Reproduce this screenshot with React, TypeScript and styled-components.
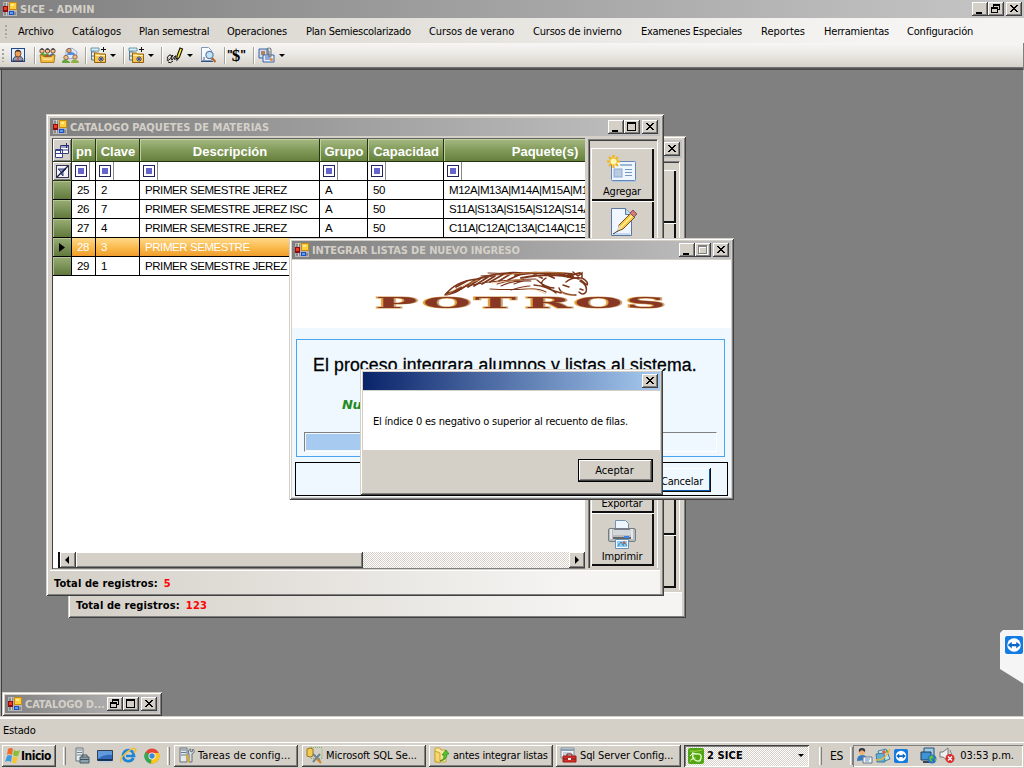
import React from "react";
import styled, { createGlobalStyle, css } from "styled-components";

const FACE = "#d4d0c8";
const raised = css`
  box-shadow: inset -1px -1px 0 #404040, inset 1px 1px 0 #fff, inset -2px -2px 0 #808080;
`;
const checker = css`
  background: conic-gradient(#fff 25%, ${FACE} 0 50%, #fff 0 75%, ${FACE} 0) 0 0 / 2px 2px;
`;

const Global = createGlobalStyle`
  * { box-sizing: border-box; }
  body { margin: 0; background: ${FACE}; overflow: hidden; }
  svg { display: block; flex: none; }
`;

const Screen = styled.div`
  position: relative;
  width: 1024px;
  height: 768px;
  display: flex;
  flex-direction: column;
  overflow: hidden;
  background: ${FACE};
  color: #000;
  font: 11px "DejaVu Sans Condensed", "DejaVu Sans", sans-serif;
  font-stretch: condensed;
  letter-spacing: -0.2px;
  white-space: nowrap;
  cursor: default;
`;

/* ---------- shared window parts ---------- */

const TitleBar = styled.div<{ $active?: boolean; $end?: string }>`
  flex: none;
  height: 18px;
  display: flex;
  align-items: center;
  padding: 0 2px;
  background: ${(p) =>
    p.$active ? "linear-gradient(90deg, #0a246a, #a6caf0)" : `linear-gradient(90deg, #808080, ${p.$end || "#c0c0c0"})`};
`;
const TitleText = styled.span<{ $track?: number }>`
  flex: 1;
  min-width: 0;
  overflow: hidden;
  padding: 1px 0 0 3px;
  color: ${FACE};
  font-weight: bold;
  letter-spacing: ${(p) => p.$track ?? -0.13}px;
  line-height: 17px;
`;
const CaptionButton = styled.span<{ $gap?: boolean }>`
  flex: none;
  width: 16px;
  height: 14px;
  margin-left: ${(p) => (p.$gap ? 2 : 0)}px;
  background: ${FACE};
  ${raised}
`;

type CapKind = "min" | "max" | "restore" | "close" | "maxOff";
const Cap = ({ kind }: { kind: CapKind }) => (
  <CaptionButton $gap={kind === "close"}>
    <svg width="16" height="14" shapeRendering="crispEdges">
      {kind === "min" && <rect x="4" y="10" width="6" height="2" />}
      {kind === "max" && <path d="M3 2h9v9h-9zM4 4v6h7v-6z" fillRule="evenodd" />}
      {kind === "maxOff" && (
        <>
          <path d="M4 3h9v9h-9zM5 5v6h7v-6z" fillRule="evenodd" fill="#fff" />
          <path d="M3 2h9v9h-9zM4 4v6h7v-6z" fillRule="evenodd" fill="#808080" />
        </>
      )}
      {kind === "restore" && (
        <path d="M5 2h7v6h-2v-1h1v-3h-5v1h-1zM3 5h7v6h-7zM4 7v3h5v-3z" fillRule="evenodd" />
      )}
      {kind === "close" && (
        <path d="M4 3h2v1h1v1h2v-1h1v-1h2v1h-1v1h-1v1h-1v1h1v1h1v1h1v1h-2v-1h-1v-1h-2v1h-1v1h-2v-1h1v-1h1v-1h1v-1h-1v-1h-1v-1h-1z" />
      )}
    </svg>
  </CaptionButton>
);

const FormIcon = () => (
  <svg width="15" height="14" viewBox="0 1 15 14" shapeRendering="crispEdges">
    <path d="M1 1h14v14h-14z" fill="#b4b4b4" />
    <path d="M2 2h4v3h-4zM2 11h4v3h-4zM12 11h2v3h-2z" fill="#8a8a8a" />
    <path d="M4 1v4M4 11v3" stroke="#d0d0d0" />
    <rect x="1" y="5" width="5" height="6" fill="#8c0c10" />
    <rect x="2" y="6" width="3" height="3" fill="#f03a24" />
    <rect x="7" y="1" width="8" height="8" fill="#c98c10" />
    <rect x="8" y="2" width="6" height="6" fill="#ffce3a" />
    <rect x="9" y="3" width="3" height="2" fill="#ffec8c" />
    <rect x="7" y="10" width="5" height="4" fill="#2350c0" />
    <rect x="8" y="11" width="3" height="2" fill="#5d9cf8" />
  </svg>
);

const WindowFrame = styled.section<{ $x: number; $y: number; $w: number; $h: number; $pad: string }>`
  position: absolute;
  left: ${(p) => p.$x}px;
  top: ${(p) => p.$y}px;
  width: ${(p) => p.$w}px;
  height: ${(p) => p.$h}px;
  padding: ${(p) => p.$pad};
  display: flex;
  flex-direction: column;
  background: ${FACE};
  box-shadow: inset 1px 1px 0 ${FACE}, inset -1px -1px 0 #404040, inset 2px 2px 0 #fff, inset -2px -2px 0 #808080;
`;

/* ---------- application bars ---------- */

const MenuBar = styled.nav`
  flex: none;
  height: 25px;
  display: flex;
  align-items: center;
  padding-top: 1px;
  background: linear-gradient(90deg, ${FACE}, #f5f4f2 85%);
`;
const Grip = styled.i`
  flex: none;
  width: 2px;
  height: 13px;
  margin: 0 10px 0 5px;
  background: repeating-linear-gradient(#a8a59e 0 2px, transparent 2px 4px);
`;
const MenuItem = styled.span<{ $w: number; $track?: number }>`
  flex: none;
  width: ${(p) => p.$w}px;
  padding-left: 1px;
  letter-spacing: ${(p) => p.$track ?? -0.2}px;
`;
const ToolStrip = styled.div`
  flex: none;
  height: 27px;
  display: flex;
  align-items: center;
  padding-bottom: 3px;
  border-right: 1px solid #808080;
  background: linear-gradient(#f7f6f4, #ebe9e5 40%, #d6d2ca 24px, #808080 24px, #484848 26px, #484848);
`;
const ToolGrip = styled(Grip)`
  margin: 0 6px 0 2px;
`;
const Tool = styled.span<{ $w: number }>`
  flex: none;
  width: ${(p) => p.$w}px;
`;
const ToolSep = styled.i`
  flex: none;
  width: 2px;
  height: 17px;
  margin-right: 3px;
  border-left: 1px solid #a5a299;
  border-right: 1px solid #fff;
`;
const Drop = styled.i`
  flex: none;
  margin: 0 7px 0 3px;
  border: 3px solid transparent;
  border-top-color: #000;
  border-bottom-width: 0;
`;

const UserIcon = () => (
  <svg width="16" height="16" viewBox="0 0 16 16">
    <rect x="1.500" y="1.500" width="13" height="13" fill="#e4effc" stroke="#26458f" />
    <path d="M3 14c0-4 2-4.500 5-4.500s5 .5 5 4.500z" fill="#8aa0b8" stroke="#2c3140" />
    <ellipse cx="8" cy="6.500" rx="3" ry="3.500" fill="#f0a056" stroke="#43301f" strokeWidth=".7" />
    <path d="M5 6c0-4 6-4 6 0l-1-1.500h-4z" fill="#25252b" />
    <path d="M8 10v4" stroke="#d44" strokeWidth="1.500" />
  </svg>
);
const GroupIcon = () => (
  <svg width="17" height="17" viewBox="0 0 17 17">
    {[3, 8.5, 14].map((x) => (
      <g key={x}>
        <circle cx={x} cy="4" r="2.200" fill="#f5c08c" stroke="#4a3020" strokeWidth=".8" />
        <path d={`M${x - 2} 3q2-4 4 0z`} fill="#4b4c5c" />
      </g>
    ))}
    <path d="M1 9q0-3 3-3l2 1q2-1 3 0l2 1q4-3 5 1v2h-15z" fill="#58a63d" />
    <path d="M10 9l2-2q3-2 4 3z" fill="#3568bb" />
    <path d="M6 10q2-5 5 0z" fill="#d93a2c" />
    <path d="M1 8h3l1 2h7l1-2h3l-1 7.500h-13z" fill="#f2bb3c" stroke="#a0680e" strokeWidth=".8" />
    <path d="M3 11h11M4 12.500h9" stroke="#fce49a" />
  </svg>
);
const PeopleIcon = () => (
  <svg width="17" height="17" viewBox="0 0 17 17">
    <path d="M4 3l6-2 5 4-1 6-10 1z" fill="#dfeafc" stroke="#90a6cc" strokeWidth=".9" />
    <path d="M5 8q0-3 4-3t4 3z" fill="#5b8fdb" />
    <circle cx="7" cy="3.500" r="2.200" fill="#eea86c" stroke="#5b4738" strokeWidth=".7" />
    <circle cx="4" cy="10.500" r="2.200" fill="#f3bd86" stroke="#5b4738" strokeWidth=".7" />
    <circle cx="13" cy="10" r="2.200" fill="#f3bd86" stroke="#5b4738" strokeWidth=".7" />
    <path d="M0 16q0-4 4-3t4 3z" fill="#61a639" />
    <path d="M9 16q0-4 4-3.500t4 3.500z" fill="#91af45" />
  </svg>
);
const FolderPlusIcon = () => (
  <svg width="17" height="17" viewBox="0 0 17 17">
    <path d="M1.500 1v12h4M1.500 5h4M1.500 9h4" stroke="#547b91" fill="none" />
    <path d="M1 1h8v3h-8z" fill="#d9eff7" stroke="#4c849b" strokeWidth=".8" />
    <path d="M4.500 6h4l1 1h6v8.500h-11z" fill="#f4c84e" stroke="#94600f" />
    <path d="M5.500 8.500h9.500" stroke="#fff0ab" />
    <path d="M11 9v6M8 12h6M9 10l4 4M13 10l-4 4" stroke="#3b4a99" />
    <path d="M13.500 0v5M11 2.500h5" stroke="#111" shapeRendering="crispEdges" />
  </svg>
);
const PenIcon = () => (
  <svg width="18" height="17" viewBox="0 0 18 17">
    <path d="M11 9l3-8 2.500 1-3 8-2.500 3z" fill="#ffec1c" stroke="#111" strokeWidth="1.100" />
    <path d="M1 11q2-4 4-3t-2 5q-3 2-1-2M5 10l2-2q-3 5-1 5l3-4q2-1 0 2t2 0M7 14q-3 3-5 1" fill="none" stroke="#111" />
  </svg>
);
const PreviewIcon = () => (
  <svg width="17" height="16" viewBox="0 0 17 16">
    <path d="M1.500.5h7l3 3v10h-10z" fill="#f8fbff" stroke="#809ab7" />
    <path d="M1 14.500h12" stroke="#2c518c" />
    <path d="M3 10l2 3m0-3l-2 3" stroke="#6f8195" strokeWidth=".8" />
    <circle cx="9.500" cy="8" r="3.600" fill="#bfe3fa" stroke="#637ca0" strokeWidth="1.200" />
    <path d="M12 11l3.500 4" stroke="#b46822" strokeWidth="2" />
  </svg>
);
const Dollar = styled.span`
  flex: none;
  width: 26px;
  margin: 0 0 0 -2px;
  display: flex;
  font: bold 12px/18px "Liberation Sans", Arial, sans-serif;
  letter-spacing: -1px;
`;
const DollarSign = styled.b`
  font: bold 17px/19px "Liberation Serif", serif;
  letter-spacing: 0;
`;
const ClipIcon = () => (
  <svg width="18" height="17" viewBox="0 0 18 17">
    <path d="M1 2h9v9h-9z" fill="#cedcf4" stroke="#3b63a4" />
    <rect x="3" y="4" width="4" height="4" fill="#b58158" />
    <path d="M5 8h11v7h-11z" fill="#e5edfa" stroke="#3b63a4" />
    <path d="M7 12h7M7 10h5" stroke="#3a68b8" />
    <path d="M9 8v-5q0-2 2-2t2 2v6q0 1-1 1t-1-1v-5" fill="none" stroke="#72767e" strokeWidth="1.100" />
    <circle cx="13.500" cy="12.500" r="1.500" fill="#e88935" />
  </svg>
);

/* ---------- workspace ---------- */

const Workspace = styled.main`
  flex: none;
  position: relative;
  height: 646px;
  background: #808080;
  border-left: 1px solid #a0a0a0;
  border-right: 1px solid ${FACE};
  box-shadow: inset 1px 0 0 #404040;
`;
const CatalogBody = styled.div`
  height: 434px;
  display: flex;
  margin: 1px 2px 0;
`;
const GridPane = styled.div`
  flex: none;
  width: 533px;
  height: 431px;
  margin-top: 1px;
  display: flex;
  flex-direction: column;
  overflow: hidden;
  background: #fff;
  border-left: 1px solid #404040;
  border-top: 1px solid #606060;
`;
const GridRow = styled.div<{ $h: number; $sel?: boolean }>`
  flex: none;
  display: grid;
  grid-template-columns: 19px 24px 44px 180px 48px 76px 142px;
  height: ${(p) => p.$h}px;
  font: 11.5px "Liberation Sans", Arial, sans-serif;
  letter-spacing: -0.43px;
  color: ${(p) => (p.$sel ? "#fff" : "#000")};
  background: ${(p) => (p.$sel ? "linear-gradient(#ffd98a, #f9b748 55%, #ee9a28)" : "#fff")};
`;
const Cell = styled.span`
  overflow: hidden;
  padding: 2px 0 0 5px;
  line-height: 15px;
  border-right: 1px solid #000;
  border-bottom: 1px solid #000;
`;
const HeadCell = styled.span<{ $left?: number }>`
  overflow: hidden;
  display: flex;
  align-items: center;
  justify-content: center;
  padding: 2px 0 0 ${(p) => p.$left || 1}px;
  background: linear-gradient(#a5b982, #829b5a 50%, #65803d);
  border-right: 1px solid #263313;
  border-bottom: 1px solid #263313;
  box-shadow: inset 1px 1px 0 #bfd09f;
  color: #fff;
  font: bold 13px "Liberation Sans", Arial, sans-serif;
  letter-spacing: 0;
`;
const RowHead = styled.span`
  display: flex;
  align-items: center;
  justify-content: center;
  background: linear-gradient(#98ad74, #61793d);
  border-right: 1px solid #000;
  border-bottom: 1px solid #000;
  box-shadow: inset 1px 1px 0 #b2c592;
`;
const CornerCell = styled.span`
  display: flex;
  align-items: center;
  justify-content: center;
  background: ${FACE};
  border-right: 1px solid #263313;
  border-bottom: 1px solid #263313;
  box-shadow: inset 1px 1px 0 #fff, inset -1px -1px 0 #808080;
`;
const FilterCell = styled.span`
  padding: 3px 0 0 3px;
  border-right: 1px solid #000;
  border-bottom: 1px solid #000;
  background: linear-gradient(90deg, transparent 17px, #888 17px 18px, transparent 18px);
`;
const FilterBox = styled.i`
  display: block;
  width: 12px;
  height: 12px;
  border: 1px solid #242460;
  background: #6464cc;
  box-shadow: inset 0 0 0 2px #fff;
`;
const HScroll = styled.div`
  flex: none;
  height: 17px;
  margin-top: auto;
  display: flex;
  padding: 0 0 0 5px;
  border-bottom: 1px solid #808080;
`;
const ScrollTrack = styled.div`
  flex: 1;
  display: flex;
  border-left: 2px solid #111;
  ${checker}
`;
const ScrollArrow = styled.span`
  flex: none;
  width: 16px;
  height: 16px;
  background: ${FACE};
  ${raised}
`;
const ScrollThumb = styled.span`
  flex: none;
  width: 287px;
  height: 16px;
  margin-right: auto;
  background: ${FACE};
  ${raised}
`;
const SidePanel = styled.aside`
  flex: none;
  width: 70px;
  height: 429px;
  margin: 2px 0 0 3px;
  padding: 8px 3px 2px 2px;
  display: flex;
  flex-direction: column;
  border-left: 1px solid #808080;
  border-top: 1px solid #808080;
  border-right: 1px solid #fff;
  box-shadow: inset 1px 1px 0 #404040;
`;
const SideButton = styled.div`
  flex: 1;
  min-height: 0;
  display: flex;
  flex-direction: column;
  align-items: center;
  justify-content: flex-end;
  padding: 0 1px 3px 0;
  line-height: 13px;
  background: ${FACE};
  box-shadow: inset 1px 1px 0 #fff, inset -2px -2px 0 #111;
  &:first-child,
  &:last-child {
    flex: 0 0 53px;
  }
`;
const SideLabel = styled.span`
  height: 13px;
`;
const Totals = styled.div`
  flex: none;
  height: 24px;
  margin-top: 1px;
  display: flex;
  align-items: center;
  padding: 1px 0 0 4px;
  border-top: 1px solid #fff;
  background: linear-gradient(90deg, ${FACE}, #f5f4f2 85%);
  font-weight: bold;
  letter-spacing: 0.1px;
`;
const Count = styled.b`
  margin-left: 6px;
  color: #f00;
  letter-spacing: 0.3px;
`;

const CornerIcon = () => (
  <svg width="16" height="17" viewBox="0 0 16 17">
    <path d="M1.500 7.500h7v8h-7zM6.500 3.500h8v8h-8z" fill="#fff" stroke="#394084" />
    <path d="M2 8.500h4M2 11.500h7M7 5h7M7 8h8" stroke="#394084" />
    <path d="M8 3.500h7M12.500 1v5" stroke="#242b70" />
  </svg>
);
const ClearFilterIcon = () => (
  <svg width="13" height="13" viewBox="0 0 13 13">
    <rect x=".5" y=".5" width="12" height="12" fill="#f3f3f8" stroke="#343458" />
    <path d="M2 4h8L7 7v4L5 9V7z" fill="#8c9abe" stroke="#383e78" />
    <path d="M1 12L12 1" stroke="#141c3d" strokeWidth="1.200" />
  </svg>
);
const AddIcon = () => (
  <svg width="30" height="30" viewBox="0 0 30 30">
    <rect x="5" y="6" width="24" height="21" rx="1.500" fill="#a9c4e2" />
    <rect x="4.500" y="6.500" width="24" height="19" rx="1" fill="#eef6ff" stroke="#6687b5" />
    <path d="M13 10h12" stroke="#9db6d2" strokeWidth="2" />
    <rect x="7" y="14" width="8" height="8" fill="#b8cbe2" stroke="#8ba9cc" />
    <path d="M18 14.500h7M18 17.500h7M18 20.500h7" stroke="#7897bc" />
    <path d="M6.500 0v13M0 6.500h13M2 2l9 9M11 2l-9 9" stroke="#f3b514" strokeWidth="2.200" />
    <circle cx="6.500" cy="6.500" r="3" fill="#fff8b4" />
  </svg>
);
const EditIcon = () => (
  <svg width="30" height="30" viewBox="0 0 30 30">
    <path d="M4.500 1.500h14l6 6v21h-20z" fill="#eff6ff" stroke="#5d789f" />
    <path d="M18.500 1.500v6h6" fill="#c6daf0" stroke="#5d789f" />
    <path d="M6 27h17" stroke="#c5d8ed" strokeWidth="2" />
    <path d="M12 18L24 6l4 4-12 12-5 2z" fill="#f7c744" stroke="#725427" />
    <path d="M14 20L26 8" stroke="#fff1a2" strokeWidth="1.500" />
    <path d="M23 6l3-3 4 4-3 3z" fill="#d47979" stroke="#7b5660" />
    <path d="M12 18l3 3-5 3z" fill="#efddbd" />
    <path d="M11 24q-2 1-5 3" stroke="#333" fill="none" />
  </svg>
);
const PrinterIcon = () => (
  <svg width="30" height="30" viewBox="0 0 30 30">
    <path d="M8.500.5h10l3 3v9h-13z" fill="#edf6ff" stroke="#7790af" />
    <rect x="1.500" y="8.500" width="27" height="13" rx="1.500" fill="#b8bbc0" stroke="#777c82" />
    <path d="M4 9v10M25 9v10" stroke="#e7e8ea" strokeWidth="2" />
    <path d="M6 9h18v6h-18z" fill="#d4d6d9" />
    <path d="M7 9h16" stroke="#777e88" strokeWidth="2" />
    <path d="M6 18h18" stroke="#666" strokeWidth="2" />
    <path d="M17 17h5" stroke="#3c80e9" strokeWidth="2" />
    <path d="M8.500 19.500h13v9h-13z" fill="#f6fbff" stroke="#688fb5" />
    <path d="M10 21h10v6h-10z" fill="#8fcaf0" />
    <path d="M11 26l3-4 3 4M15 25l3-2 2 3" stroke="#3786b8" fill="none" />
    <path d="M16 23l2-1" stroke="#e64f2a" strokeWidth="2" />
  </svg>
);

const headers: { label: string; left?: number }[] = [
  { label: "pn" },
  { label: "Clave" },
  { label: "Descripción" },
  { label: "Grupo" },
  { label: "Capacidad" },
  { label: "Paquete(s)", left: 61 },
];
const rows = [
  ["25", "2", "PRIMER SEMESTRE JEREZ", "A", "50", "M12A|M13A|M14A|M15A|M16A"],
  ["26", "7", "PRIMER SEMESTRE JEREZ ISC", "A", "50", "S11A|S13A|S15A|S12A|S14A|"],
  ["27", "4", "PRIMER SEMESTRE JEREZ", "A", "50", "C11A|C12A|C13A|C14A|C15A"],
  ["28", "3", "PRIMER SEMESTRE", "", "", ""],
  ["29", "1", "PRIMER SEMESTRE JEREZ", "", "", ""],
];

const sideButtons = ["Agregar", "", "", "", "", "", "Exportar", "Imprimir"];

const CatalogWindow = ({ x, y, total, full }: { x: number; y: number; total: string; full?: boolean }) => (
  <WindowFrame $x={x} $y={y} $w={618} $h={482} $pad="4px">
    <TitleBar>
      {full && <FormIcon />}
      <TitleText $track={0.05}>{full && "CATALOGO PAQUETES DE MATERIAS"}</TitleText>
      <Cap kind="min" />
      <Cap kind="max" />
      <Cap kind="close" />
    </TitleBar>
    <CatalogBody>
      <GridPane>
        {full && (
          <>
            <GridRow $h={23}>
              <CornerCell>
                <CornerIcon />
              </CornerCell>
              {headers.map((h) => (
                <HeadCell key={h.label} $left={h.left}>
                  {h.label}
                </HeadCell>
              ))}
            </GridRow>
            <GridRow $h={19}>
              <CornerCell>
                <ClearFilterIcon />
              </CornerCell>
              {headers.map((h) => (
                <FilterCell key={h.label}>
                  <FilterBox />
                </FilterCell>
              ))}
            </GridRow>
            {rows.map((r) => (
              <GridRow key={r[0]} $h={19} $sel={r[0] === "28"}>
                <RowHead>
                  {r[0] === "28" && (
                    <svg width="6" height="9">
                      <path d="M0 0l6 4.500-6 4.500z" />
                    </svg>
                  )}
                </RowHead>
                {r.map((c, i) => (
                  <Cell key={i}>{c}</Cell>
                ))}
              </GridRow>
            ))}
            <HScroll>
              <ScrollTrack>
                <ScrollArrow>
                  <svg width="16" height="16">
                    <path d="M9 4v8L5 8z" />
                  </svg>
                </ScrollArrow>
                <ScrollThumb />
                <ScrollArrow>
                  <svg width="16" height="16">
                    <path d="M6 4v8l4-4z" />
                  </svg>
                </ScrollArrow>
              </ScrollTrack>
            </HScroll>
          </>
        )}
      </GridPane>
      <SidePanel>
        {sideButtons.map((label, i) => (
          <SideButton key={i}>
            {full && i === 0 && <AddIcon />}
            {full && i === 1 && <EditIcon />}
            {full && i === 7 && <PrinterIcon />}
            <SideLabel>{full && label}</SideLabel>
          </SideButton>
        ))}
      </SidePanel>
    </CatalogBody>
    <Totals>
      Total de registros:<Count>{total}</Count>
    </Totals>
  </WindowFrame>
);

/* ---------- integration dialog ---------- */

const Banner = styled.div`
  flex: none;
  height: 68px;
  margin-top: 1px;
  padding: 11px 0 0 82px;
  background: #fff;
`;
const DialogBody = styled.div`
  flex: 1;
  min-height: 0;
  display: flex;
  flex-direction: column;
  padding: 11px 3px 2px;
  background: #eff7ff;
`;
const ProcessBox = styled.div`
  flex: none;
  height: 118px;
  margin: 0 3px 0 1px;
  padding: 14px 7px 0;
  border: 1px solid #4aa3ee;
`;
const Heading = styled.div`
  padding-left: 9px;
  font: 17.6px/22px "Liberation Sans", Arial, sans-serif;
  letter-spacing: 0.15px;
  -webkit-text-stroke: 0.3px #000;
`;
const Progressing = styled.div`
  margin-top: 20px;
  padding-left: 38px;
  font: italic bold 13px/18px "DejaVu Sans", sans-serif;
  letter-spacing: -0.5px;
  color: #228b22;
`;
const ProgressBar = styled.div`
  height: 20px;
  margin: 18px 0 0;
  padding: 1px;
  border: 1px solid #808080;
  border-right-color: #fff;
  border-bottom-color: #fff;
`;
const ProgressFill = styled.div`
  width: 80px;
  height: 100%;
  background: #a6caf0;
`;
const DialogFooter = styled.div`
  flex: none;
  height: 34px;
  margin-top: 5px;
  padding: 5px 16px 3px;
  display: flex;
  justify-content: flex-end;
  border: 1px solid #000;
`;
const CancelButton = styled.span`
  width: 75px;
  height: 24px;
  padding-right: 8px;
  line-height: 27px;
  text-align: right;
  box-shadow: inset -1px -1px 0 #111, inset 1px 1px 0 #fff, inset -2px -2px 0 #0a58a8;
`;

const Logo = () => (
  <svg width="296" height="42" viewBox="0 0 296 42">
    <g fill="none" stroke="#7c3519" strokeLinecap="round">
      <path d="M71 24Q82 10 103 8Q125 0 150 2Q180 0 205 8" strokeWidth="1.500" />
      <path d="M73 23Q82 21 87 17" strokeWidth="3" />
      <path d="M82 16l11-6M87 18l14-9M94 16l12-8M100 15l14-9M108 13l13-8M116 11l14-8M125 10l13-8M134 9l13-6" strokeWidth="1.700" />
      <path d="M82 18Q112 9 146 9M99 9l20-4M107 5l29-2M114 2l35 1M123 13q15-5 39-5" strokeWidth="1" />
      <path d="M141 4q26-4 57-1M147 7q30-6 53 0M160 3l8 4M171 3l9 4M184 2l10 4M193 5l13-3M197 3l3 4" strokeWidth="1.900" />
      <path d="M199 1l5 4 4-3v5q7 4 5 7l-6-5M207 7q-9-1-15 4M206 10q8 4 6 11-3 4-7 0M209 19l-3-1" strokeWidth="1.500" />
      <path d="M189 14l6 2M202 24q-15 0-17-7M163 9q9 8 17 8M160 14q13 1 22 8M172 7q-8 5-1 9 8 4 16 6" strokeWidth="1.400" />
      <path d="M116 18q20 1 36 0 12-1 20 3M127 15q12-6 27-5M140 13q10-4 17-3M137 19q13-4 19-4" strokeWidth="1.100" />
    </g>
    <g stroke="#e2aa61" strokeWidth=".6" fill="none">
      <path d="M73 24Q88 13 105 9M130 4Q162 0 190 2M118 12l31-4M151 17q11 0 21 6M187 20q4 5 13 4" />
    </g>
    <text
      transform="scale(4.400 1)"
      x="0.350 11.100 22.900 34.300 45.500 57.200"
      y="37"
      fontFamily="DejaVu Serif"
      fontWeight="bold"
      fontSize="14"
      letterSpacing="0"
      fill="#873723"
      stroke="#d7a256"
      strokeWidth="1"
      paintOrder="stroke"
    >
      POTROS
    </text>
  </svg>
);

const MessageText = styled.div`
  flex: none;
  height: 59px;
  margin-top: 1px;
  padding-left: 10px;
  line-height: 62px;
  background: #fff;
`;
const MessageActions = styled.div`
  flex: 1;
  display: flex;
  justify-content: flex-end;
  align-items: flex-start;
  padding: 9px 7px 0;
`;
const DefaultButton = styled.span`
  width: 75px;
  height: 23px;
  padding-right: 2px;
  border: 1px solid #000;
  text-align: center;
  letter-spacing: 0;
  line-height: 22px;
  background: ${FACE};
  ${raised}
`;

/* ---------- bottom bars ---------- */

const StatusBar = styled.footer`
  flex: none;
  height: 25px;
  margin-top: 1px;
  padding-left: 3px;
  border-top: 2px solid #fff;
  line-height: 23px;
`;
const TaskBar = styled.footer`
  flex: 1;
  display: flex;
  align-items: center;
  border-top: 1px solid #fff;
  padding: 0 1px 0 2px;
`;
const TaskButton = styled.span<{ $w: number; $gap?: number; $pressed?: boolean; $bold?: boolean; $track?: number }>`
  flex: none;
  width: ${(p) => p.$w}px;
  height: 22px;
  margin-right: ${(p) => p.$gap ?? 3}px;
  padding: 0 5px 0 4px;
  display: flex;
  align-items: center;
  gap: 3px;
  font-weight: ${(p) => (p.$bold ? "bold" : "normal")};
  letter-spacing: ${(p) => p.$track ?? -0.1}px;
  ${(p) =>
    p.$pressed
      ? css`
          ${checker}
          box-shadow: inset 1px 1px 0 #404040, inset -1px -1px 0 #fff, inset 2px 2px 0 #808080;
        `
      : raised}
`;
const StartButton = styled(TaskButton)`
  padding: 0 0 0 2px;
  gap: 0;
  font-size: 12px;
`;
const Push = styled.i`
  margin-left: auto;
  border: 3px solid transparent;
  border-top-color: #000;
  border-bottom-width: 0;
`;
const TaskSep = styled.i<{ $m: string }>`
  flex: none;
  width: 3px;
  height: 18px;
  margin: ${(p) => p.$m};
  border-left: 1px solid #fff;
  border-right: 1px solid #808080;
`;
const Quick = styled.span`
  display: flex;
  align-items: center;
  gap: 7px;
  width: 93px;
`;
const Lang = styled.span`
  flex: none;
  width: 20px;
  font-size: 12px;
`;
const Tray = styled.div`
  flex: none;
  width: 170px;
  height: 22px;
  display: flex;
  align-items: center;
  gap: 2px;
  padding: 0 9px 0 3px;
  box-shadow: inset 1px 1px 0 #808080, inset -1px -1px 0 #fff;
`;
const TrayGap = styled.i`
  width: 8px;
`;
const Clock = styled.span`
  margin-left: auto;
  letter-spacing: 0;
`;

const WinFlag = () => (
  <svg width="17" height="17" viewBox="0 0 17 17">
    <path d="M4 2q3-2 5 0l-1 6q-3-2-5 0z" fill="#ed6c2c" />
    <path d="M10 3q3 2 6 0l-2 6q-3 1-5-1z" fill="#88bf36" />
    <path d="M3 9q3-2 5 0l-1 6q-3-2-6 0z" fill="#419bdf" />
    <path d="M9 9q2 2 5 1l-2 6q-3 1-4-1z" fill="#f6c52f" />
  </svg>
);
const ServerIcon = () => (
  <svg width="16" height="17" viewBox="0 0 16 17">
    <path d="M2 1h7v13h-7z" fill="#e9edf0" stroke="#66727d" />
    <path d="M3 3h5M3 5.500h5M3 8h5" stroke="#728392" />
    <path d="M6 10h9v6h-9z" fill="#8ca0ad" stroke="#495b67" />
    <path d="M8 10v-2h5v2M6 12.500h9" fill="none" stroke="#41515d" />
  </svg>
);
const DesktopIcon = () => (
  <svg width="16" height="16" viewBox="0 0 16 16">
    <path d="M.5 2.500h15v10h-15z" fill="#3269bc" stroke="#344250" />
    <path d="M1 3h14v4Q7 6 1 11z" fill="#6199dd" />
    <path d="M1 13h14l-2 2h-10z" fill="#c1cbd3" />
    <path d="M1 12h14" stroke="#18345a" strokeWidth="2" />
  </svg>
);
const IeIcon = () => (
  <svg width="17" height="17" viewBox="0 0 17 17">
    <path d="M13.500 11Q11 15 7 14T3 8Q4 3 8.500 3T14 9H6" fill="none" stroke="#1c85d7" strokeWidth="2.700" />
    <path d="M1 15Q-1 12 6 6T15 2q2 1-1 4" fill="none" stroke="#eebd31" strokeWidth="1.500" />
  </svg>
);
const ChromeIcon = () => (
  <svg width="16" height="16" viewBox="0 0 16 16">
    <circle cx="8" cy="8" r="7.500" fill="#e84435" />
    <path d="M8 8L1.500 4A7.500 7.500 0 0 0 7 15.500z" fill="#34a853" />
    <path d="M8 8h7.500A7.500 7.500 0 0 1 7 15.500z" fill="#fbc91c" />
    <path d="M8 5h7q1 2 .5 4H8z" fill="#fbc91c" />
    <circle cx="8" cy="8" r="3.500" fill="#fff" />
    <circle cx="8" cy="8" r="2.700" fill="#4285d4" />
  </svg>
);
const ToolsIcon = () => (
  <svg width="17" height="17" viewBox="0 0 17 17">
    <path d="M2 1h7v14h-7z" fill="#e4e9ec" stroke="#65717a" />
    <path d="M3 3h5M3 5.500h5M3 8h5" stroke="#657888" />
    <path d="M13 2q-4 1-2 5v8h3V7q4-2 1-5l-1 3-2-1z" fill="#d4dee5" stroke="#64717c" />
    <path d="M9 8l2 7" stroke="#e9a71d" strokeWidth="2" />
  </svg>
);
const SqlIcon = () => (
  <svg width="17" height="17" viewBox="0 0 17 17">
    <rect x="5" y=".5" width="11" height="11" fill="none" stroke="#79b956" strokeDasharray="1 1" />
    <path d="M1 2q3-2 6 0v7q-3 2-6 0z" fill="#efcd51" stroke="#9e741c" />
    <path d="M7 7l7 7M14 7l-7 8" stroke="#718391" strokeWidth="2" />
    <path d="M11 12l4 4" stroke="#d98520" strokeWidth="2" />
  </svg>
);
const FolderIcon = () => (
  <svg width="17" height="17" viewBox="0 0 17 17">
    <path d="M2 1h5l1 2h5v12H2z" fill="#fae697" stroke="#c7a63a" />
    <path d="M2 4l5 2v10l-5-2z" fill="#f8d66b" stroke="#c7a63a" />
    <path d="M7 14q5-2 4-6H9l4-5 3 4h-2q0 6-7 7z" fill="#52c42c" stroke="#2c841a" strokeWidth=".7" />
  </svg>
);
const ConfigIcon = () => (
  <svg width="17" height="17" viewBox="0 0 17 17">
    <path d="M1 1h13v10H1z" fill="#f1f4f7" stroke="#7f8b96" />
    <path d="M1 3h13" stroke="#8ca0b5" strokeWidth="2" />
    <path d="M3 6h8M3 8h8" stroke="#9da8b3" />
    <path d="M3 9h13v6H3z" fill="#d72f28" stroke="#951e19" />
    <path d="M7 9V7h5v2M3 12h13" fill="none" stroke="#74211f" />
    <rect x="8" y="11" width="3" height="2" fill="#eee" />
  </svg>
);
const SiceIcon = () => (
  <svg width="16" height="16" viewBox="0 0 16 16">
    <rect width="16" height="16" rx="2" fill="#52a615" />
    <path d="M2 3q6 1 12-1M2 14q1-5 6-4" stroke="#a1d445" fill="none" />
    <path d="M4 5l4 1q6-1 5 4t-6 2q-3-2-2-6" fill="none" stroke="#e7ffc7" strokeWidth="1.400" />
    <path d="M2 8l3-3M3 12l3-2" stroke="#fff" />
  </svg>
);
const TrayUser = () => (
  <svg width="17" height="16" viewBox="0 0 17 16">
    <circle cx="6" cy="4" r="3" fill="#f1b06e" />
    <path d="M3 4q-1-4 3-4t3 4l-3-2z" fill="#343743" />
    <path d="M1 13q0-6 5-6t5 5z" fill="#347bc5" />
    <path d="M7 9h9v6H7z" fill="#f4f7fb" stroke="#67788a" />
    <path d="M9 11h5M9 13h4" stroke="#6d8dba" />
  </svg>
);
const TrayGlobe = () => (
  <svg width="17" height="16" viewBox="0 0 17 16">
    <path d="M3 3l8-2 4 10-8 3z" fill="#bfe2ef" stroke="#3983a9" />
    <path d="M1 6l8-1 1 9H2z" fill="#69aecf" stroke="#3c7e9c" />
    <path d="M7 3l3-1 1 3-3 1z" fill="#e65d3a" />
    <path d="M11 3l2-1 1 3-2 1z" fill="#63ad44" />
    <path d="M1 12Q10 13 15 1" fill="none" stroke="#efb43a" strokeWidth="1.500" />
  </svg>
);
const ViewerIcon = ({ size = 16 }: { size?: number }) => (
  <svg width={size} height={size} viewBox="0 0 16 16">
    <rect width="16" height="16" rx="2" fill="#147be2" />
    <circle cx="8" cy="8" r="6" fill="#fff" />
    <path d="M2.500 8L6 5v2h4V5l3.500 3-3.500 3V9H6v2z" fill="#0b67cc" />
  </svg>
);
const NetIcon = () => (
  <svg width="17" height="17" viewBox="0 0 17 17">
    <path d="M4 1h10v8H4z" fill="#9ecbe8" stroke="#294f75" />
    <path d="M1 5h10v8H1z" fill="#3f94d5" stroke="#243d59" />
    <path d="M3 15h7" stroke="#33475b" strokeWidth="2" />
    <circle cx="12" cy="12" r="4.500" fill="#2b70c4" />
    <path d="M9 10l3-2 2 3-3 1 2 3-3-1zM14 13l2-2v3z" fill="#5bc142" />
  </svg>
);
const MuteIcon = () => (
  <svg width="17" height="17" viewBox="0 0 17 17">
    <path d="M1 5h3l5-4v13l-5-4H1z" fill="#eff0f1" stroke="#777" />
    <path d="M11 3q3 4 0 8" fill="none" stroke="#888" />
    <circle cx="11" cy="11.500" r="4.500" fill="#db2c2b" />
    <path d="M9 9.500l4 4m0-4l-4 4" stroke="#fff" strokeWidth="1.400" />
  </svg>
);

const EdgeTab = styled.div`
  position: absolute;
  right: 0;
  top: 630px;
  width: 24px;
  height: 54px;
  padding: 6px 0 0 5px;
  background: #f5f5f6;
  clip-path: polygon(0 3px, 3px 0, 100% 0, 100% 100%, 0 39px);
`;

const menu: [string, number, number?][] = [
  ["Archivo", 54],
  ["Catálogos", 67, 0],
  ["Plan semestral", 88, -0.2],
  ["Operaciones", 79],
  ["Plan Semiescolarizado", 123, -0.3],
  ["Cursos de verano", 104, -0.1],
  ["Cursos de invierno", 108],
  ["Examenes Especiales", 120, -0.3],
  ["Reportes", 63, 0],
  ["Herramientas", 83],
  ["Configuración", 80],
];

export default function App() {
  return (
    <Screen>
      <Global />
      <TitleBar $end="#c6c6c6">
        <FormIcon />
        <TitleText $track={0.1}>SICE - ADMIN</TitleText>
        <Cap kind="min" />
        <Cap kind="restore" />
        <Cap kind="close" />
      </TitleBar>
      <MenuBar>
        <Grip />
        {menu.map(([label, w, track]) => (
          <MenuItem key={label} $w={w} $track={track}>
            {label}
          </MenuItem>
        ))}
      </MenuBar>
      <ToolStrip>
        <ToolGrip />
        <Tool $w={24}><UserIcon /></Tool>
        <ToolSep />
        <Tool $w={23}><GroupIcon /></Tool>
        <Tool $w={23}><PeopleIcon /></Tool>
        <ToolSep />
        <Tool $w={17}><FolderPlusIcon /></Tool>
        <Drop />
        <ToolSep />
        <Tool $w={17}><FolderPlusIcon /></Tool>
        <Drop />
        <ToolSep />
        <Tool $w={18}><PenIcon /></Tool>
        <Drop />
        <Tool $w={24}><PreviewIcon /></Tool>
        <ToolSep />
        <Dollar>"<DollarSign>$</DollarSign>"</Dollar>
        <ToolSep />
        <Tool $w={18}><ClipIcon /></Tool>
        <Drop />
      </ToolStrip>

      <Workspace>
        <CatalogWindow x={67} y={66} total="123" />
        <CatalogWindow x={45} y={44} total="5" full />

        <WindowFrame $x={288} $y={168} $w={445} $h={262} $pad="3px">
          <TitleBar>
            <FormIcon />
            <TitleText>INTEGRAR LISTAS DE NUEVO INGRESO</TitleText>
            <Cap kind="min" />
            <Cap kind="maxOff" />
            <Cap kind="close" />
          </TitleBar>
          <Banner>
            <Logo />
          </Banner>
          <DialogBody>
            <ProcessBox>
              <Heading>El proceso integrara alumnos y listas al sistema.</Heading>
              <Progressing>Nu</Progressing>
              <ProgressBar>
                <ProgressFill />
              </ProgressBar>
            </ProcessBox>
            <DialogFooter>
              <CancelButton>Cancelar</CancelButton>
            </DialogFooter>
          </DialogBody>
        </WindowFrame>

        <WindowFrame $x={359} $y={299} $w={303} $h={126} $pad="3px">
          <TitleBar $active>
            <TitleText />
            <Cap kind="close" />
          </TitleBar>
          <MessageText>El índice 0 es negativo o superior al recuento de filas.</MessageText>
          <MessageActions>
            <DefaultButton>Aceptar</DefaultButton>
          </MessageActions>
        </WindowFrame>

        <WindowFrame $x={1} $y={622} $w={160} $h={24} $pad="3px">
          <TitleBar>
            <FormIcon />
            <TitleText>CATALOGO D...</TitleText>
            <Cap kind="restore" />
            <Cap kind="max" />
            <Cap kind="close" />
          </TitleBar>
        </WindowFrame>
      </Workspace>

      <StatusBar>Estado</StatusBar>
      <TaskBar>
        <StartButton $w={54} $gap={7} $bold $track={-0.5}>
          <WinFlag />
          Inicio
        </StartButton>
        <TaskSep $m="0 8px 0 0" />
        <Quick>
          <ServerIcon />
          <DesktopIcon />
          <IeIcon />
          <ChromeIcon />
        </Quick>
        <TaskSep $m="0 4px 0 3px" />
        <TaskButton $w={124} $gap={4} $track={0.15}><ToolsIcon />Tareas de config...</TaskButton>
        <TaskButton $w={124}><SqlIcon />Microsoft SQL Se...</TaskButton>
        <TaskButton $w={124} $track={-0.2}><FolderIcon />antes integrar listas</TaskButton>
        <TaskButton $w={125}><ConfigIcon />Sql Server Config...</TaskButton>
        <TaskButton $w={125} $gap={10} $pressed $bold $track={0.1}><SiceIcon />2 SICE<Push /></TaskButton>
        <TaskSep $m="0 8px 0 0" />
        <Lang>ES</Lang>
        <TaskSep $m="0" />
        <Tray>
          <TrayUser />
          <TrayGlobe />
          <ViewerIcon size={14} />
          <TrayGap />
          <NetIcon />
          <MuteIcon />
          <Clock>03:53 p.m.</Clock>
        </Tray>
      </TaskBar>

      <EdgeTab>
        <ViewerIcon size={18} />
      </EdgeTab>
    </Screen>
  );
}
